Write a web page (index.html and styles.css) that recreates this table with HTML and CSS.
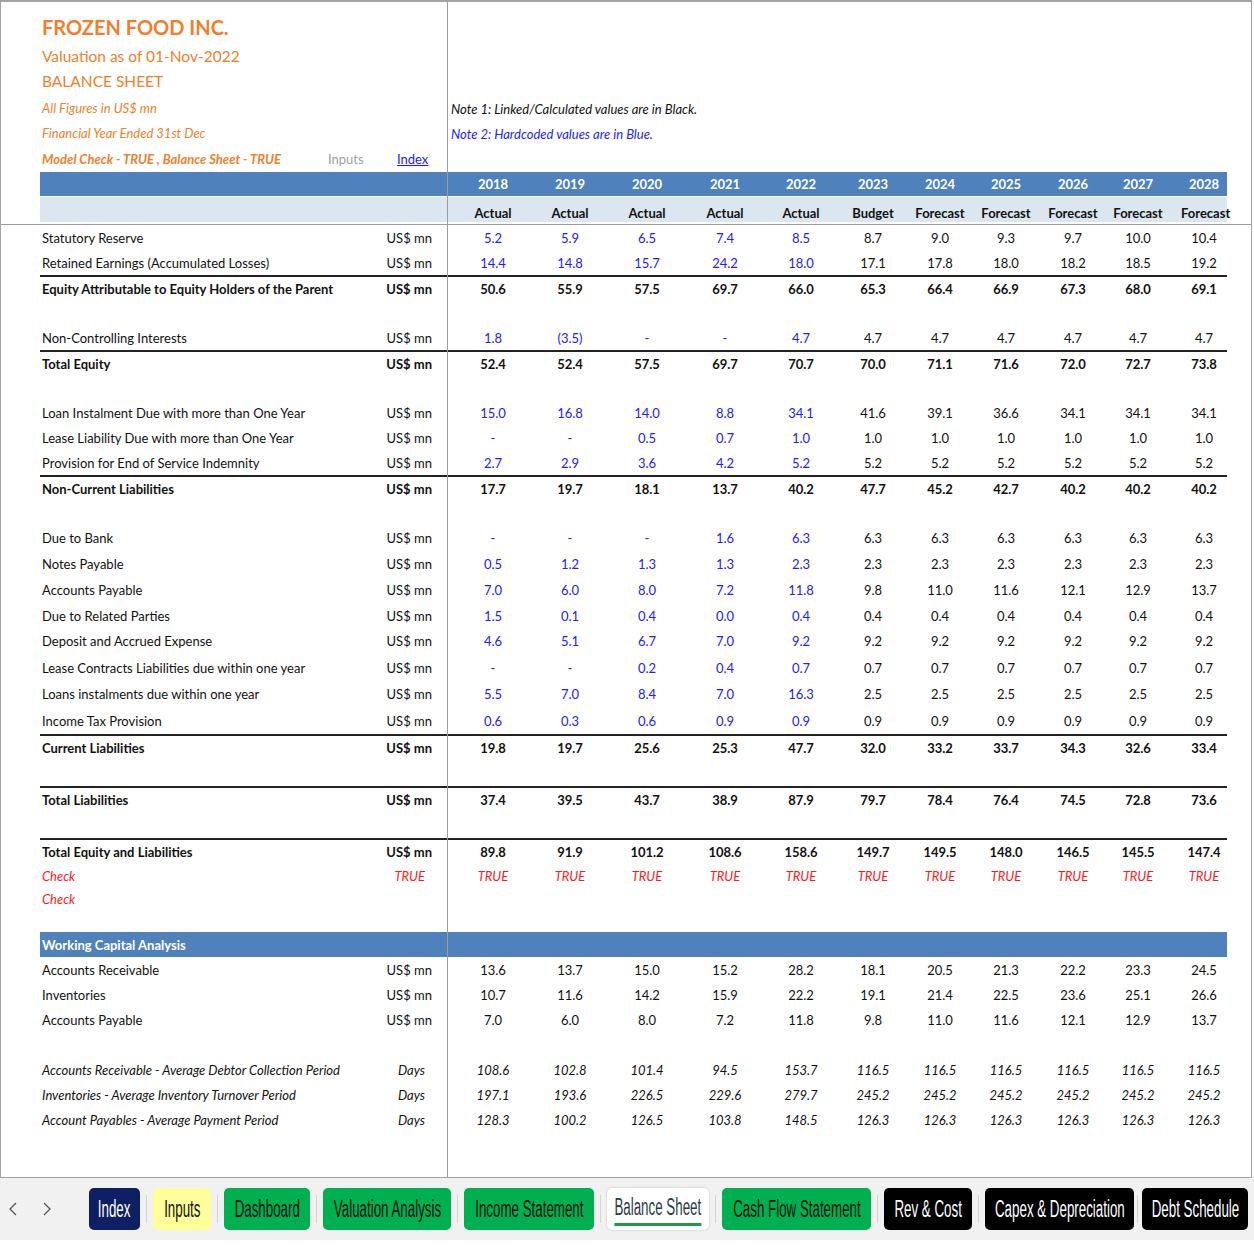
FILE: index.html
```html
<!DOCTYPE html>
<html lang="en">
<head>
<meta charset="utf-8">
<title>Frozen Food Inc. - Balance Sheet</title>
<link rel="stylesheet" href="styles.css">
</head>
<body>
<div class="sheet">
  <div class="freeze-v"></div>
  <header class="head">
    <div class="intro">
      <div class="title">
        <div class="t1">FROZEN FOOD INC.</div>
        <div class="t2">Valuation as of 01-Nov-2022</div>
        <div class="t2b">BALANCE SHEET</div>
        <div class="t3">All Figures in US$ mn</div>
        <div class="t3">Financial Year Ended 31st Dec</div>
        <div class="t4"><span class="mc">Model Check - TRUE , Balance Sheet - TRUE</span><span class="inputs">Inputs</span><a class="index" href="#">Index</a></div>
      </div>
      <div class="notes">
        <div class="note n1">Note 1: Linked/Calculated values are in Black.</div>
        <div class="note n2">Note 2: Hardcoded values are in Blue.</div>
      </div>
    </div>
    <div class="band dark">
      <div class="lbl"></div>
      <div class="c">2018</div><div class="c">2019</div><div class="c">2020</div><div class="c">2021</div><div class="c">2022</div><div class="c">2023</div><div class="c">2024</div><div class="c">2025</div><div class="c">2026</div><div class="c">2027</div><div class="c">2028</div>
    </div>
    <div class="band light">
      <div class="lbl"></div>
      <div class="c">Actual</div><div class="c">Actual</div><div class="c">Actual</div><div class="c">Actual</div><div class="c">Actual</div><div class="c">Budget</div><div class="c">Forecast</div><div class="c">Forecast</div><div class="c">Forecast</div><div class="c">Forecast</div><div class="c">Forecast</div>
    </div>
  </header>

  <section class="grid">
    <div class="row in"><div class="lbl"><span>Statutory Reserve</span><span class="u">US$ mn</span></div><div class="c">5.2</div><div class="c">5.9</div><div class="c">6.5</div><div class="c">7.4</div><div class="c">8.5</div><div class="c">8.7</div><div class="c">9.0</div><div class="c">9.3</div><div class="c">9.7</div><div class="c">10.0</div><div class="c">10.4</div></div>
    <div class="row in"><div class="lbl"><span>Retained Earnings (Accumulated Losses)</span><span class="u">US$ mn</span></div><div class="c">14.4</div><div class="c">14.8</div><div class="c">15.7</div><div class="c">24.2</div><div class="c">18.0</div><div class="c">17.1</div><div class="c">17.8</div><div class="c">18.0</div><div class="c">18.2</div><div class="c">18.5</div><div class="c">19.2</div></div>
    <div class="row tot"><div class="lbl"><span>Equity Attributable to Equity Holders of the Parent</span><span class="u">US$ mn</span></div><div class="c">50.6</div><div class="c">55.9</div><div class="c">57.5</div><div class="c">69.7</div><div class="c">66.0</div><div class="c">65.3</div><div class="c">66.4</div><div class="c">66.9</div><div class="c">67.3</div><div class="c">68.0</div><div class="c">69.1</div></div>
    <div class="row"></div>
    <div class="row in"><div class="lbl"><span>Non-Controlling Interests</span><span class="u">US$ mn</span></div><div class="c">1.8</div><div class="c">(3.5)</div><div class="c">-</div><div class="c">-</div><div class="c">4.7</div><div class="c">4.7</div><div class="c">4.7</div><div class="c">4.7</div><div class="c">4.7</div><div class="c">4.7</div><div class="c">4.7</div></div>
    <div class="row tot"><div class="lbl"><span>Total Equity</span><span class="u">US$ mn</span></div><div class="c">52.4</div><div class="c">52.4</div><div class="c">57.5</div><div class="c">69.7</div><div class="c">70.7</div><div class="c">70.0</div><div class="c">71.1</div><div class="c">71.6</div><div class="c">72.0</div><div class="c">72.7</div><div class="c">73.8</div></div>
    <div class="row"></div>
    <div class="row in"><div class="lbl"><span>Loan Instalment Due with more than One Year</span><span class="u">US$ mn</span></div><div class="c">15.0</div><div class="c">16.8</div><div class="c">14.0</div><div class="c">8.8</div><div class="c">34.1</div><div class="c">41.6</div><div class="c">39.1</div><div class="c">36.6</div><div class="c">34.1</div><div class="c">34.1</div><div class="c">34.1</div></div>
    <div class="row in"><div class="lbl"><span>Lease Liability Due with more than One Year</span><span class="u">US$ mn</span></div><div class="c">-</div><div class="c">-</div><div class="c">0.5</div><div class="c">0.7</div><div class="c">1.0</div><div class="c">1.0</div><div class="c">1.0</div><div class="c">1.0</div><div class="c">1.0</div><div class="c">1.0</div><div class="c">1.0</div></div>
    <div class="row in"><div class="lbl"><span>Provision for End of Service Indemnity</span><span class="u">US$ mn</span></div><div class="c">2.7</div><div class="c">2.9</div><div class="c">3.6</div><div class="c">4.2</div><div class="c">5.2</div><div class="c">5.2</div><div class="c">5.2</div><div class="c">5.2</div><div class="c">5.2</div><div class="c">5.2</div><div class="c">5.2</div></div>
    <div class="row tot"><div class="lbl"><span>Non-Current Liabilities</span><span class="u">US$ mn</span></div><div class="c">17.7</div><div class="c">19.7</div><div class="c">18.1</div><div class="c">13.7</div><div class="c">40.2</div><div class="c">47.7</div><div class="c">45.2</div><div class="c">42.7</div><div class="c">40.2</div><div class="c">40.2</div><div class="c">40.2</div></div>
    <div class="row"></div>
    <div class="row in h26"><div class="lbl"><span>Due to Bank</span><span class="u">US$ mn</span></div><div class="c">-</div><div class="c">-</div><div class="c">-</div><div class="c">1.6</div><div class="c">6.3</div><div class="c">6.3</div><div class="c">6.3</div><div class="c">6.3</div><div class="c">6.3</div><div class="c">6.3</div><div class="c">6.3</div></div>
    <div class="row in h26"><div class="lbl"><span>Notes Payable</span><span class="u">US$ mn</span></div><div class="c">0.5</div><div class="c">1.2</div><div class="c">1.3</div><div class="c">1.3</div><div class="c">2.3</div><div class="c">2.3</div><div class="c">2.3</div><div class="c">2.3</div><div class="c">2.3</div><div class="c">2.3</div><div class="c">2.3</div></div>
    <div class="row in h26"><div class="lbl"><span>Accounts Payable</span><span class="u">US$ mn</span></div><div class="c">7.0</div><div class="c">6.0</div><div class="c">8.0</div><div class="c">7.2</div><div class="c">11.8</div><div class="c">9.8</div><div class="c">11.0</div><div class="c">11.6</div><div class="c">12.1</div><div class="c">12.9</div><div class="c">13.7</div></div>
    <div class="row in"><div class="lbl"><span>Due to Related Parties</span><span class="u">US$ mn</span></div><div class="c">1.5</div><div class="c">0.1</div><div class="c">0.4</div><div class="c">0.0</div><div class="c">0.4</div><div class="c">0.4</div><div class="c">0.4</div><div class="c">0.4</div><div class="c">0.4</div><div class="c">0.4</div><div class="c">0.4</div></div>
    <div class="row in h26"><div class="lbl"><span>Deposit and Accrued Expense</span><span class="u">US$ mn</span></div><div class="c">4.6</div><div class="c">5.1</div><div class="c">6.7</div><div class="c">7.0</div><div class="c">9.2</div><div class="c">9.2</div><div class="c">9.2</div><div class="c">9.2</div><div class="c">9.2</div><div class="c">9.2</div><div class="c">9.2</div></div>
    <div class="row in h27"><div class="lbl"><span>Lease Contracts Liabilities due within one year</span><span class="u">US$ mn</span></div><div class="c">-</div><div class="c">-</div><div class="c">0.2</div><div class="c">0.4</div><div class="c">0.7</div><div class="c">0.7</div><div class="c">0.7</div><div class="c">0.7</div><div class="c">0.7</div><div class="c">0.7</div><div class="c">0.7</div></div>
    <div class="row in h26"><div class="lbl"><span>Loans instalments due within one year</span><span class="u">US$ mn</span></div><div class="c">5.5</div><div class="c">7.0</div><div class="c">8.4</div><div class="c">7.0</div><div class="c">16.3</div><div class="c">2.5</div><div class="c">2.5</div><div class="c">2.5</div><div class="c">2.5</div><div class="c">2.5</div><div class="c">2.5</div></div>
    <div class="row in h27"><div class="lbl"><span>Income Tax Provision</span><span class="u">US$ mn</span></div><div class="c">0.6</div><div class="c">0.3</div><div class="c">0.6</div><div class="c">0.9</div><div class="c">0.9</div><div class="c">0.9</div><div class="c">0.9</div><div class="c">0.9</div><div class="c">0.9</div><div class="c">0.9</div><div class="c">0.9</div></div>
    <div class="row tot h26"><div class="lbl"><span>Current Liabilities</span><span class="u">US$ mn</span></div><div class="c">19.8</div><div class="c">19.7</div><div class="c">25.6</div><div class="c">25.3</div><div class="c">47.7</div><div class="c">32.0</div><div class="c">33.2</div><div class="c">33.7</div><div class="c">34.3</div><div class="c">32.6</div><div class="c">33.4</div></div>
    <div class="row h26"></div>
    <div class="row tot h26"><div class="lbl"><span>Total Liabilities</span><span class="u">US$ mn</span></div><div class="c">37.4</div><div class="c">39.5</div><div class="c">43.7</div><div class="c">38.9</div><div class="c">87.9</div><div class="c">79.7</div><div class="c">78.4</div><div class="c">76.4</div><div class="c">74.5</div><div class="c">72.8</div><div class="c">73.6</div></div>
    <div class="row h26"></div>
    <div class="row tot h26"><div class="lbl"><span>Total Equity and Liabilities</span><span class="u">US$ mn</span></div><div class="c">89.8</div><div class="c">91.9</div><div class="c">101.2</div><div class="c">108.6</div><div class="c">158.6</div><div class="c">149.7</div><div class="c">149.5</div><div class="c">148.0</div><div class="c">146.5</div><div class="c">145.5</div><div class="c">147.4</div></div>
    <div class="row chk h23"><div class="lbl"><span>Check</span><span class="u">TRUE</span></div><div class="c">TRUE</div><div class="c">TRUE</div><div class="c">TRUE</div><div class="c">TRUE</div><div class="c">TRUE</div><div class="c">TRUE</div><div class="c">TRUE</div><div class="c">TRUE</div><div class="c">TRUE</div><div class="c">TRUE</div><div class="c">TRUE</div></div>
    <div class="row chk h24"><div class="lbl"><span>Check</span></div></div>
    <div class="row h21"></div>
    <div class="row sec"><div class="lbl"><span>Working Capital Analysis</span></div></div>
    <div class="row"><div class="lbl"><span>Accounts Receivable</span><span class="u">US$ mn</span></div><div class="c">13.6</div><div class="c">13.7</div><div class="c">15.0</div><div class="c">15.2</div><div class="c">28.2</div><div class="c">18.1</div><div class="c">20.5</div><div class="c">21.3</div><div class="c">22.2</div><div class="c">23.3</div><div class="c">24.5</div></div>
    <div class="row"><div class="lbl"><span>Inventories</span><span class="u">US$ mn</span></div><div class="c">10.7</div><div class="c">11.6</div><div class="c">14.2</div><div class="c">15.9</div><div class="c">22.2</div><div class="c">19.1</div><div class="c">21.4</div><div class="c">22.5</div><div class="c">23.6</div><div class="c">25.1</div><div class="c">26.6</div></div>
    <div class="row"><div class="lbl"><span>Accounts Payable</span><span class="u">US$ mn</span></div><div class="c">7.0</div><div class="c">6.0</div><div class="c">8.0</div><div class="c">7.2</div><div class="c">11.8</div><div class="c">9.8</div><div class="c">11.0</div><div class="c">11.6</div><div class="c">12.1</div><div class="c">12.9</div><div class="c">13.7</div></div>
    <div class="row"></div>
    <div class="row it"><div class="lbl"><span>Accounts Receivable - Average Debtor Collection Period</span><span class="u">Days</span></div><div class="c">108.6</div><div class="c">102.8</div><div class="c">101.4</div><div class="c">94.5</div><div class="c">153.7</div><div class="c">116.5</div><div class="c">116.5</div><div class="c">116.5</div><div class="c">116.5</div><div class="c">116.5</div><div class="c">116.5</div></div>
    <div class="row it"><div class="lbl"><span>Inventories - Average Inventory Turnover Period</span><span class="u">Days</span></div><div class="c">197.1</div><div class="c">193.6</div><div class="c">226.5</div><div class="c">229.6</div><div class="c">279.7</div><div class="c">245.2</div><div class="c">245.2</div><div class="c">245.2</div><div class="c">245.2</div><div class="c">245.2</div><div class="c">245.2</div></div>
    <div class="row it"><div class="lbl"><span>Account Payables - Average Payment Period</span><span class="u">Days</span></div><div class="c">128.3</div><div class="c">100.2</div><div class="c">126.5</div><div class="c">103.8</div><div class="c">148.5</div><div class="c">126.3</div><div class="c">126.3</div><div class="c">126.3</div><div class="c">126.3</div><div class="c">126.3</div><div class="c">126.3</div></div>
  </section>
</div>

<nav class="tabs">
  <div class="arrows">
    <svg width="8" height="14" viewBox="0 0 8 14"><path d="M7 1 L1 7 L7 13" fill="none" stroke="#555" stroke-width="1.3"/></svg>
    <svg width="8" height="14" viewBox="0 0 8 14"><path d="M1 1 L7 7 L1 13" fill="none" stroke="#555" stroke-width="1.3"/></svg>
  </div>
  <div class="tab navy w-index"><span>Index</span></div>
  <i class="sep"></i>
  <div class="tab yellow w-inputs"><span>Inputs</span></div>
  <i class="sep"></i>
  <div class="tab green w-dash"><span>Dashboard</span></div>
  <i class="sep"></i>
  <div class="tab green w-val"><span>Valuation Analysis</span></div>
  <i class="sep"></i>
  <div class="tab green w-inc"><span>Income Statement</span></div>
  <i class="sep"></i>
  <div class="tab active w-bal"><span>Balance Sheet</span></div>
  <i class="sep"></i>
  <div class="tab green w-cash"><span>Cash Flow Statement</span></div>
  <i class="sep"></i>
  <div class="tab black w-rev"><span>Rev &amp; Cost</span></div>
  <i class="sep"></i>
  <div class="tab black w-capex"><span>Capex &amp; Depreciation</span></div>
  <i class="sep sep-narrow"></i>
  <div class="tab black w-debt"><span>Debt Schedule</span></div>
</nav>
</body>
</html>
```

FILE: styles.css
```css
* { box-sizing: border-box; }

html, body { margin: 0; padding: 0; }

body {
  width: 1254px;
  height: 1254px;
  background: #ffffff;
  font-family: Lato, "Open Sans", "Liberation Sans", sans-serif;
  font-size: 13px;
  color: #111111;
  overflow: hidden;
}

.sheet {
  position: relative;
  width: 1252px;
  height: 1178px;
  border: 1px solid #a3a3a3;
  border-top: 2px solid #a3a3a3;
  background: #ffffff;
}

/* frozen-pane divider lying over the cells */
.freeze-v {
  position: absolute;
  left: 446px;
  top: 0;
  bottom: 0;
  width: 1px;
  background: #9c9c9c;
  z-index: 2;
}

.head {
  border-bottom: 1px solid #9c9c9c;
  padding-bottom: 2px;
}

.intro {
  display: grid;
  grid-template-columns: 447px 1fr;
  height: 170px;
}

.title {
  padding: 11px 0 0 41px;
  color: #ef7f2c;
}

.t1 {
  font-size: 20px;
  font-weight: 700;
  line-height: 28px;
  height: 29px;
}

.t2 {
  font-size: 15.5px;
  line-height: 28px;
}

.t2b {
  font-size: 15.5px;
  line-height: 22px;
}

.t3 {
  font-size: 13px;
  font-style: italic;
  line-height: 25px;
}

.title .t3:nth-child(4) { margin-top: 4px; }

.t4 {
  display: flex;
  align-items: center;
  height: 26px;
  font-size: 13px;
}

.mc {
  width: 286px;
  font-weight: 700;
  font-style: italic;
  white-space: nowrap;
}

.inputs {
  width: 69px;
  color: #a0a0a0;
}

.index {
  color: #1a1aff;
  text-decoration: underline;
}

.notes {
  padding: 95px 0 0 3px;
  font-size: 13px;
  font-style: italic;
}

.note { line-height: 25px; }
.n1 { color: #111111; }
.n2 { color: #2323ff; }

/* column grid shared by bands and rows */
.band,
.row {
  display: grid;
  grid-template-columns: 408px 84px 76px 78px 78px 74px 70px 64px 68px 66px 64px 57px;
  margin-left: 39px;
  width: 1187px;
  align-items: center;
}

.c {
  text-align: center;
  white-space: nowrap;
}

.band .c:nth-child(2),
.row .c:nth-child(2) { padding-left: 6px; }

.band .c:nth-child(12),
.row .c:nth-child(12) { padding-left: 11px; }

.band {
  font-weight: 700;
}

.dark {
  height: 24px;
  background: #4f81bd;
  color: #ffffff;
}

.light {
  height: 25px;
  margin-top: 1px;
  padding-top: 6px;
  background: #dce6f1;
  color: #111111;
}

.lbl {
  display: flex;
  justify-content: space-between;
  align-items: center;
  padding: 0 16px 0 2px;
  white-space: nowrap;
}

.row { height: 25px; }
.h21 { height: 21px; }
.h23 { height: 23px; }
.h24 { height: 24px; }
.h26 { height: 26px; }
.h27 { height: 27px; }

.in .c:nth-child(-n+6) { color: #2020ff; }

.tot {
  font-weight: 700;
  border-top: 2px solid #222222;
}

.chk {
  color: #ff1a1a;
  font-style: italic;
}

.chk .u { padding-right: 7px; }

.it { font-style: italic; }
.it .u { padding-right: 7px; }

.sec {
  background: #4f81bd;
  color: #ffffff;
  font-weight: 700;
}

/* sheet tabs */
.tabs {
  display: flex;
  align-items: flex-start;
  height: 62px;
  padding-top: 10px;
  background: #f1f1f1;
  font-family: "Liberation Sans", Arial, sans-serif;
}

.arrows {
  width: 89px;
  height: 42px;
  display: flex;
  align-items: center;
  gap: 26px;
  padding-left: 9px;
}

.sep {
  display: block;
  width: 1px;
  height: 28px;
  margin: 7px 6px 0;
  background: #d4d4d4;
}

.sep-narrow { margin: 7px 4px 0 3px; }

.tab {
  height: 42px;
  border-radius: 5px;
  display: flex;
  align-items: center;
  justify-content: center;
  font-size: 23px;
}

.tab span {
  display: inline-block;
  white-space: nowrap;
  transform: scaleX(0.58);
}

.navy { background: #0f1f63; color: #ffffff; }
.yellow { background: #ffff99; color: #111111; }
.green { background: #00b050; color: #111111; }
.black { background: #000000; color: #ffffff; }

.active {
  background: #ffffff;
  color: #2a3b4a;
  box-shadow: 0 0 2px rgba(0, 0, 0, 0.25);
}

.active span {
  border-bottom: 3px solid #1e9a4a;
  padding-bottom: 2px;
  margin-top: 2px;
}

.w-index { width: 51px; }
.w-inputs { width: 58px; }
.w-dash { width: 86px; }
.w-val { width: 128px; }
.w-inc { width: 130px; }
.w-bal { width: 102px; }
.w-cash { width: 149px; }
.w-rev { width: 88px; }
.w-capex { width: 149px; }
.w-debt { width: 106px; }
```
